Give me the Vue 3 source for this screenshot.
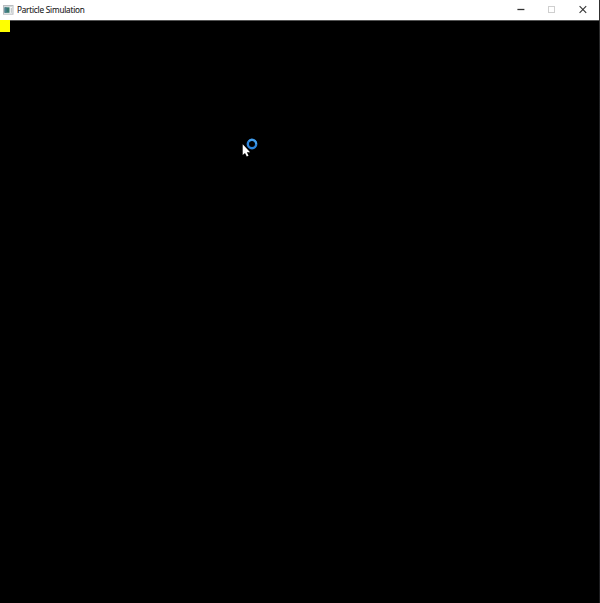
<script setup>
const title = 'Particle Simulation'
</script>

<template>
  <div class="screen">
    <main class="window">
      <header class="titlebar">
        <svg class="app-icon" width="11" height="10" viewBox="0 0 11 10">
          <rect x="0.5" y="0.5" width="9.5" height="8.7" fill="#f4f6f6" stroke="#b9bdc0" />
          <rect x="1" y="1" width="8.5" height="1" fill="#d5dadd" />
          <rect x="1.5" y="2.3" width="5" height="5.5" fill="#37796f" />
          <rect x="1.5" y="2.3" width="2" height="5.5" fill="#4c7f91" />
          <rect x="7.8" y="3" width="1.2" height="4.8" fill="#c6cbcd" />
        </svg>
        <span class="title">{{ title }}</span>
        <nav class="controls">
          <button class="control" aria-label="Minimize">
            <svg width="9" height="9" viewBox="0 0 9 9"><path d="M1.4 4.5H8.4" stroke="#333" stroke-width="1.3" /></svg>
          </button>
          <button class="control" aria-label="Maximize" disabled>
            <svg width="9" height="9" viewBox="0 0 9 9"><rect x="1.5" y="1.5" width="6" height="6" fill="none" stroke="#cfcfcf" /></svg>
          </button>
          <button class="control" aria-label="Close">
            <svg width="9" height="9" viewBox="0 0 9 9"><path d="M1.6 1.2L8.2 7.8M8.2 1.2L1.6 7.8" stroke="#333" stroke-width="1.1" /></svg>
          </button>
        </nav>
      </header>
      <section class="canvas">
        <div class="particle"></div>
      </section>
    </main>
    <div class="desktop-edge"></div>
    <svg class="cursor" width="18" height="22" viewBox="0 0 18 22">
      <circle cx="10" cy="6" r="4.2" fill="none" stroke="#2b83da" stroke-width="2.4" />
      <path d="M7 3.1A4.2 4.2 0 0 1 14.2 6" fill="none" stroke="#459fe9" stroke-width="1.8" />
      <path d="M0.7 6.3V17L3 14.9L4.8 18.6L6.5 17.8L4.8 14.2H8.1Z" fill="#fff" />
    </svg>
  </div>
</template>

<style>
body {
  margin: 0;
  background: #000;
}
</style>

<style scoped>
.screen {
  position: relative;
  display: flex;
  width: 600px;
  height: 603px;
  overflow: hidden;
  background: #000;
}
.window {
  display: flex;
  flex-direction: column;
  width: 599px;
}
.titlebar {
  box-sizing: border-box;
  display: flex;
  align-items: center;
  height: 21px;
  padding-left: 3px;
  padding-right: 1px;
  padding-bottom: 1px;
  border-bottom: 1px solid #555;
  background: #fff;
}
.app-icon {
  flex: none;
}
.title {
  margin-left: 3px;
  font: 8.2px/18px "Open Sans", "Noto Sans", sans-serif;
  letter-spacing: -0.19px;
  color: #111;
  -webkit-text-stroke: 0.1px #111;
  white-space: nowrap;
}
.controls {
  display: flex;
  margin-left: auto;
}
.control {
  display: flex;
  align-items: center;
  justify-content: center;
  width: 31px;
  height: 19px;
  padding: 0;
  border: 0;
  background: transparent;
}
.canvas {
  flex: 1;
  background: #000;
}
.particle {
  width: 10px;
  height: 12px;
  margin-top: -1px;
  background: #ff0;
}
.desktop-edge {
  width: 1px;
  background: linear-gradient(#303030 0 20px, #202123 60px, #1c1c1e 380px, #25252b 490px, #1b1b1d);
}
.cursor {
  position: absolute;
  left: 242px;
  top: 138px;
}
</style>
